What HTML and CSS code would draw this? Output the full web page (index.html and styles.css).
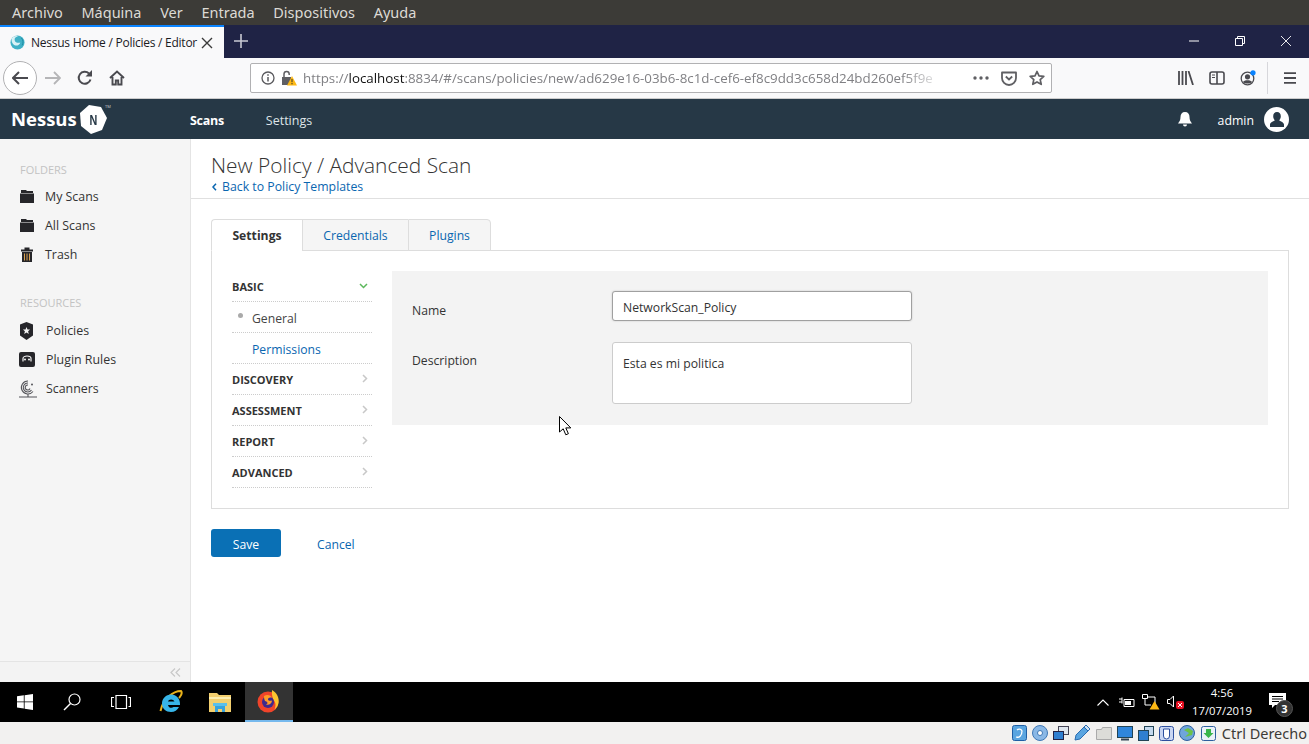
FILE: index.html
```html
<!DOCTYPE html>
<html>
<head>
<meta charset="utf-8">
<title>Nessus Home / Policies / Editor</title>
<link rel="stylesheet" href="styles.css">
</head>
<body>
<div class="vm-menu">
  <span>Archivo</span><span>Máquina</span><span>Ver</span><span>Entrada</span><span>Dispositivos</span><span>Ayuda</span>
</div>

<div class="tabstrip">
  <div class="ff-tab">
    <svg class="favicon" width="15" height="15" viewBox="0 0 16 16"><circle cx="8" cy="8" r="7.500" fill="#3fb1c6"/><path d="M2 3.500c2-2.500 5-3 7-1.500-2.500-.5-4.500 1-4 3.500S8.500 9 11 8c-.5 2.500-3.500 4-6 3S1 6 2 3.500z" fill="#d8f1f5"/><path d="M12 3c2 2 2.500 5 1 8" fill="none" stroke="#1d8aa0"/></svg>
    <span class="ff-tab-title">Nessus Home / Policies / Editor</span>
    <svg class="tab-close" width="12" height="12" viewBox="0 0 12 12"><path d="M1 1l10 10M11 1L1 11" stroke="#3a3a3a" stroke-width="1.400"/></svg>
  </div>
  <svg class="newtab" width="14" height="14" viewBox="0 0 14 14"><path d="M7 0v14M0 7h14" stroke="#c9cad3" stroke-width="1.600"/></svg>
  <div class="win-btns">
    <svg width="10" height="10" viewBox="0 0 10 10"><path d="M0 5h10" stroke="#fff"/></svg>
    <svg width="10" height="10" viewBox="0 0 10 10"><path d="M.5 2.500h7v7h-7zM2.500 2.500v-2h7v7h-2" fill="none" stroke="#fff"/></svg>
    <svg width="10" height="10" viewBox="0 0 10 10"><path d="M0 0l10 10M10 0L0 10" stroke="#fff" stroke-width=".9"/></svg>
  </div>
</div>

<div class="toolbar">
  <div class="back-btn"><svg width="16" height="14" viewBox="0 0 16 14"><path d="M7 1L1 7l6 6M1 7h15" fill="none" stroke="#4a4a4f" stroke-width="2"/></svg></div>
  <svg class="fwd" width="16" height="14" viewBox="0 0 16 14"><path d="M9 1l6 6-6 6M15 7H0" fill="none" stroke="#b5b5b7" stroke-width="1.800"/></svg>
  <svg class="reload" width="16" height="16" viewBox="0 0 16 16"><path d="M13.500 9.500A6 6 0 1 1 12 3.500" fill="none" stroke="#4a4a4f" stroke-width="2"/><path d="M15 0v6.500H8.500z" fill="#4a4a4f"/></svg>
  <svg class="home" width="16" height="16" viewBox="0 0 16 16"><path d="M1 8l7-6.500L15 8M3.500 7v7.500h3.300v-4h2.400v4h3.300V7" fill="none" stroke="#4a4a4f" stroke-width="1.900"/></svg>
  <div class="urlbar">
    <svg class="url-icon" width="14" height="14" viewBox="0 0 14 14"><circle cx="7" cy="7" r="6" fill="none" stroke="#5a5a5e" stroke-width="1.300"/><path d="M7 6v4.500M7 3.200v1.600" stroke="#5a5a5e" stroke-width="1.500"/></svg>
    <svg class="url-lock" width="16" height="16" viewBox="0 0 16 16"><path d="M1 7h9v8H1z" fill="#5f5f63"/><path d="M3 7V4a2.600 2.600 0 0 1 5.200 0v1" fill="none" stroke="#5f5f63" stroke-width="1.500"/><path d="M11 6l5 9.500H6z" fill="#fdb813"/><path d="M11 9v3.200M11 13v1.300" stroke="#333" stroke-width="1"/></svg>
    <span class="url-text">https://<b>localhost</b>:8834/#/scans/policies/new/ad629e16-03b6-8c1d-cef6-ef8c9dd3c658d24bd260ef5f9e</span>
    <svg class="url-act" width="16" height="4" viewBox="0 0 16 4"><circle cx="2" cy="2" r="1.700" fill="#5f5f63"/><circle cx="8" cy="2" r="1.700" fill="#5f5f63"/><circle cx="14" cy="2" r="1.700" fill="#5f5f63"/></svg>
    <svg class="url-act" width="16" height="15" viewBox="0 0 16 15"><path d="M1 1.500h14v5.500a7 7 0 0 1-14 0z" fill="none" stroke="#5f5f63" stroke-width="1.800" stroke-linejoin="round"/><path d="M4.800 5.500L8 8.500l3.200-3" fill="none" stroke="#5f5f63" stroke-width="1.800"/></svg>
    <svg class="url-act" width="16" height="16" viewBox="0 0 16 16"><path d="M8 1.500l2 4.400 4.800.5-3.600 3.200 1 4.700L8 11.900l-4.200 2.400 1-4.700-3.600-3.200 4.800-.5z" fill="none" stroke="#5f5f63" stroke-width="1.700" stroke-linejoin="round"/></svg>
  </div>
  <div class="tool-right">
    <svg width="16" height="14" viewBox="0 0 16 14"><path d="M1 0v14M4.500 0v14M8 0v14M10.500 0l4.500 14" fill="none" stroke="#4a4a4f" stroke-width="1.800"/></svg>
    <svg width="16" height="14" viewBox="0 0 16 14"><rect x="1" y="1" width="14" height="12" rx="2" fill="none" stroke="#4a4a4f" stroke-width="1.600"/><path d="M8 1v12" stroke="#4a4a4f" stroke-width="1.600"/><path d="M3 4h3M3 6.500h3" stroke="#4a4a4f"/></svg>
    <svg width="16" height="16" viewBox="0 0 16 16"><circle cx="7.500" cy="8.500" r="6.300" fill="none" stroke="#4a4a4f" stroke-width="1.300"/><circle cx="7.500" cy="6.800" r="2.600" fill="#4a4a4f"/><path d="M3 12c1-2.500 8-2.500 9 0-2 2-7 2-9 0z" fill="#4a4a4f"/><circle cx="13" cy="2.800" r="2.600" fill="#0a84ff"/></svg>
    <i class="tool-sep"></i>
    <svg width="14" height="12" viewBox="0 0 14 12"><path d="M1 1.200h12M1 6h12M1 10.800h12" stroke="#4a4a4f" stroke-width="1.800"/></svg>
  </div>
</div>

<header class="nessus-bar">
  <div class="logo">
    <span class="logo-word">Nessus</span>
    <span class="logo-badge">
      <svg width="27" height="29" viewBox="0 0 27 29"><path d="M9 0l12 2 6 11-5 12-11 4L1 21 0 8z" fill="#fff"/></svg>
      <b>N</b>
    </span>
    <span class="logo-tm">TM</span>
  </div>
  <nav class="top-nav">
    <a class="on">Scans</a>
    <a>Settings</a>
  </nav>
  <div class="user-area">
    <svg width="14" height="15" viewBox="0 0 14 15"><path d="M7 0c3 0 4.500 2 4.500 5 0 3 1 4.500 2.500 6.500H0C1.500 9.500 2.500 8 2.500 5 2.500 2 4 0 7 0z" fill="#fff"/><path d="M5 12.500h4a2 2 0 0 1-4 0z" fill="#fff"/></svg>
    <span class="user-name">admin</span>
    <span class="avatar"><svg width="14" height="15" viewBox="0 0 14 15"><path d="M7 0c2.500 0 3.800 1.800 3.800 4.200 0 1.700-.7 3.200-1.600 4 .2 1 4.800 1.700 4.800 4.300V15H0v-2.500c0-2.600 4.600-3.300 4.800-4.300-.9-.8-1.600-2.300-1.600-4C3.200 1.800 4.500 0 7 0z" fill="#263846"/></svg></span>
  </div>
</header>

<div class="page">
  <aside class="sidebar">
    <div class="side-scroll">
      <h4>FOLDERS</h4>
      <a class="side-link"><svg width="14" height="13" viewBox="0 0 14 13"><path d="M1 0h5l1 1h6v2H1zM0 3.500h14V13H0z" fill="#26262a"/></svg>My Scans</a>
      <a class="side-link"><svg width="14" height="13" viewBox="0 0 14 13"><path d="M1 0h5l1 1h6v2H1zM0 3.500h14V13H0z" fill="#26262a"/></svg>All Scans</a>
      <a class="side-link"><svg width="14" height="15" viewBox="0 0 14 15"><path d="M1 2.500h12V4.500H1zM4.500 2.500V.5h5v2z" fill="#26262a"/><path d="M2 5h10v10H2z" fill="#26262a"/><path d="M4.500 6.500v7M7 6.500v7M9.500 6.500v7" stroke="#d9a050"/></svg>Trash</a>
      <h4 class="res">RESOURCES</h4>
      <a class="side-link wide"><svg width="15" height="18" viewBox="0 0 15 18"><path d="M7.500 0l6.500 2.500v11L7.500 18 1 13.500v-11z" fill="#26262a"/><path d="M7.500 5l1 2.500 2.600.1-2 1.700.7 2.600-2.300-1.500-2.300 1.500.7-2.600-2-1.700 2.600-.1z" fill="#f5f5f5"/></svg>Policies</a>
      <a class="side-link wide"><svg width="16" height="15" viewBox="0 0 16 15"><rect width="16" height="15" rx="2" fill="#26262a"/><path d="M4 9.500V6.500C4 5 6 4 8 4s4 1 4 2.500v3" fill="none" stroke="#f5f5f5" stroke-width="1.200"/><circle cx="6" cy="7.500" r="1" fill="#f5f5f5"/><circle cx="10" cy="7.500" r="1" fill="#f5f5f5"/></svg>Plugin Rules</a>
      <a class="side-link wide"><svg width="18" height="18" viewBox="0 0 18 18"><path d="M14 11.500A6.500 6.500 0 1 1 9 1M12.500 10A4.500 4.500 0 1 1 9 3M11 8.500A2.500 2.500 0 1 1 9 5M9 13.500V17M0 17h18" fill="none" stroke="#55555a" stroke-width="1.100"/><circle cx="13" cy="4.500" r="1" fill="#55555a"/></svg>Scanners</a>
    </div>
    <div class="side-foot">
      <svg width="11" height="9" viewBox="0 0 11 9"><path d="M5 .5L1 4.500l4 4M10 .5L6 4.500l4 4" fill="none" stroke="#c8c8c8" stroke-width="1.200"/></svg>
    </div>
  </aside>

  <main class="content">
    <div class="title-area">
      <h1>New Policy / Advanced Scan</h1>
      <a class="back-link"><svg width="5" height="8" viewBox="0 0 5 8"><path d="M4 .8L1 4l3 3.200" fill="none" stroke="#0a66b0" stroke-width="1.500"/></svg>Back to Policy Templates</a>
    </div>

    <div class="editor">
      <div class="tabs">
        <a class="tab on">Settings</a>
        <a class="tab">Credentials</a>
        <a class="tab last">Plugins</a>
      </div>
      <div class="panel">
        <ul class="sections">
          <li class="sec">BASIC<svg width="9" height="6" viewBox="0 0 9 6"><path d="M1 1l3.500 3.500L8 1" fill="none" stroke="#5cb85c" stroke-width="1.500"/></svg></li>
          <li class="sub cur">General</li>
          <li class="sub link">Permissions</li>
          <li class="sec">DISCOVERY<svg width="6" height="9" viewBox="0 0 6 9"><path d="M1 1l3.500 3.500L1 8" fill="none" stroke="#c8c8c8" stroke-width="1.500"/></svg></li>
          <li class="sec">ASSESSMENT<svg width="6" height="9" viewBox="0 0 6 9"><path d="M1 1l3.500 3.500L1 8" fill="none" stroke="#c8c8c8" stroke-width="1.500"/></svg></li>
          <li class="sec">REPORT<svg width="6" height="9" viewBox="0 0 6 9"><path d="M1 1l3.500 3.500L1 8" fill="none" stroke="#c8c8c8" stroke-width="1.500"/></svg></li>
          <li class="sec">ADVANCED<svg width="6" height="9" viewBox="0 0 6 9"><path d="M1 1l3.500 3.500L1 8" fill="none" stroke="#c8c8c8" stroke-width="1.500"/></svg></li>
        </ul>
        <div class="form-box">
          <div class="form-row">
            <label>Name</label>
            <div class="input focus">NetworkScan_Policy</div>
          </div>
          <div class="form-row">
            <label>Description</label>
            <div class="input area">Esta es mi politica</div>
          </div>
        </div>
      </div>
      <div class="actions">
        <a class="btn">Save</a>
        <a class="cancel">Cancel</a>
      </div>
    </div>
  </main>
</div>

<svg class="cursor" width="13" height="20" viewBox="0 0 13 20"><path d="M.5.500v15.500l3.700-3.200 2.600 6 2.600-1.100-2.600-5.800h5z" fill="#fff" stroke="#000"/></svg>

<div class="taskbar">
  <div class="task-left">
    <span class="task-item"><svg width="16" height="16" viewBox="0 0 16 16"><path d="M0 2.300l6.800-1v6.200H0zM7.600 1.200L16 0v7.500H7.600zM0 8.300h6.800v6.300l-6.800-1zM7.600 8.300H16V16l-8.400-1.200z" fill="#fff"/></svg></span>
    <span class="task-item"><svg width="18" height="18" viewBox="0 0 18 18"><circle cx="11.500" cy="6.500" r="5.500" fill="none" stroke="#fff" stroke-width="1.200"/><path d="M7.500 10.500L1 17" stroke="#fff" stroke-width="1.500"/></svg></span>
    <span class="task-item"><svg width="20" height="14" viewBox="0 0 20 14"><path d="M5 .5h10.500v13H5zM3 2.500H.5v9H3M17.500 2.500H19.500v9h-2" fill="none" stroke="#fff" stroke-width="1.200"/></svg></span>
    <span class="task-item"><svg width="24" height="24" viewBox="0 0 24 24"><path d="M1.500 21C4 9 14 1 22 1c2 2-1 6-2 7" fill="none" stroke="#e9b21a" stroke-width="2"/><path d="M12 4.500c-5 0-9 4-9 9s4 8.500 9 8.500c3.500 0 6.500-2 8-5h-5.500c-1.500 1.500-5 1-5.500-2h12c.5-6-3.500-10.500-9-10.500zM9 11.500c.5-2.800 5.500-2.800 6.500 0z" fill="#37b5e8"/></svg></span>
    <span class="task-item"><svg width="22" height="20" viewBox="0 0 22 20"><path d="M0 1h8l2 2h12v17H0z" fill="#f3cf6e"/><path d="M0 5h22v2H0z" fill="#fdeeb0"/><path d="M6 13h10v7h-3v-3h-4v3H6z" fill="#38a3dd"/><path d="M4 11h14v3H4z" fill="#5cc0ea"/></svg></span>
    <span class="task-item active"><svg width="24" height="24" viewBox="0 0 24 24"><circle cx="12" cy="13" r="10.500" fill="#f0442a"/><path d="M16 1c5 3 7.500 8 6.500 13-.5 3-2 5-4 6.500 1.500-3 1.500-7-1-9.500-1-2-2-6-1.500-10z" fill="#fdc52f"/><circle cx="12" cy="13" r="6" fill="#3f2a8c"/><path d="M8 7c3-2 7-1 8 2-2-1-4 0-4 1.500s3 1.500 4 1c0 3-3 5-6 4 3-1 1-3-1-3.500-1-2-1-4-1-5z" fill="#ff9b26"/></svg></span>
  </div>
  <div class="tray">
    <svg class="tray-up" width="12" height="7" viewBox="0 0 12 7"><path d="M.5 6.500L6 1l5.500 5.500" fill="none" stroke="#fff" stroke-width="1.100"/></svg>
    <svg width="16" height="11" viewBox="0 0 16 11"><path d="M5 2.500h10v7H5z" fill="none" stroke="#fff"/><path d="M6 4h6v4H6z" fill="#fff"/><path d="M0 2h3M0 5h3M3 .5v6" stroke="#fff"/></svg>
    <svg width="18" height="16" viewBox="0 0 18 16"><path d="M.5.500h5v4h-5zM3 4.500V11h6M6 3h7v8h-2" fill="none" stroke="#fff"/><path d="M12.500 7l5 8.500h-10z" fill="#fdb813"/></svg>
    <svg width="18" height="14" viewBox="0 0 18 14"><path d="M.5 4.500h2.500L6.500 1v11L3 8.500H.5z" fill="none" stroke="#fff"/><rect x="9" y="6" width="8" height="8" rx="2" fill="#e81123"/><path d="M11 8l4 4M15 8l-4 4" stroke="#fff"/></svg>
    <div class="clock"><span>4:56</span><span>17/07/2019</span></div>
    <div class="notif">
      <svg width="17" height="15" viewBox="0 0 17 15"><path d="M0 0h17v12H6l-3 3v-3H0z" fill="#fff"/><path d="M3 3.500h11M3 6h11M3 8.500h7" stroke="#000"/></svg>
      <b>3</b>
    </div>
  </div>
</div>

<div class="statusbar">
  <svg width="15" height="16" viewBox="0 0 15 16"><rect x=".5" y=".5" width="14" height="15" rx="2" fill="#5aa5e0" stroke="#1f5fa5"/><path d="M4 12c3 1 6-1 6-6a3 3 0 0 0-5-1" fill="none" stroke="#fff" stroke-width="1.300"/></svg>
  <svg width="16" height="16" viewBox="0 0 16 16"><circle cx="8" cy="8" r="7.500" fill="#8ab8e6" stroke="#3f78b5"/><circle cx="8" cy="8" r="2.500" fill="#fff" stroke="#3f78b5"/></svg>
  <svg width="16" height="15" viewBox="0 0 16 15"><rect x="5.500" y=".5" width="10" height="8" fill="#dfe6ee" stroke="#445"/><rect x=".5" y="5.500" width="10" height="8" fill="#2f7fd0" stroke="#224"/></svg>
  <svg width="16" height="16" viewBox="0 0 16 16"><path d="M1 15l1-5 8-8 4 4-8 8z" fill="#5aa5e0" stroke="#2b6cb0"/><path d="M10 2l2-2 4 4-2 2z" fill="#cfe3f5" stroke="#2b6cb0"/></svg>
  <svg width="16" height="14" viewBox="0 0 16 14"><path d="M.5 3.500h5l1-2h9v12H.5z" fill="#dcdcd8" stroke="#aaa"/></svg>
  <svg width="16" height="15" viewBox="0 0 16 15"><rect x=".5" y=".5" width="15" height="11" fill="#2f86dc" stroke="#245"/><path d="M4 13.500h8" stroke="#345" stroke-width="2"/></svg>
  <svg width="16" height="15" viewBox="0 0 16 15"><rect x="6.500" y=".5" width="9" height="9" fill="#c5d9ee" stroke="#245"/><rect x=".5" y="4.500" width="10" height="10" fill="#2f7fd0" stroke="#245"/></svg>
  <svg width="15" height="15" viewBox="0 0 15 15"><rect x=".5" y=".5" width="14" height="14" rx="2" fill="#c9d6f2" stroke="#2d4f9e"/><path d="M4.500 3v7a3 3 0 0 0 6 0V3z" fill="#fff" stroke="#2d4f9e"/></svg>
  <svg width="16" height="16" viewBox="0 0 16 16"><circle cx="8" cy="8" r="7.500" fill="#6fa5dc" stroke="#2d5f9e"/><path d="M5 5l5 3-4 4 7-2 1-4-5-3z" fill="#6cc24a"/></svg>
  <svg width="15" height="15" viewBox="0 0 15 15"><rect x=".5" y=".5" width="14" height="14" rx="2" fill="#eaf1f8" stroke="#2d5f9e"/><path d="M5 3h5v4h2.500l-5 5-5-5H5z" fill="#39b54a"/></svg>
  <span class="host-key">Ctrl Derecho</span>
</div>
</body>
</html>
```

FILE: styles.css
```css
* { box-sizing: border-box; }
html, body { margin: 0; padding: 0; height: 744px; overflow: hidden; }
body { position: relative; width: 1309px; font-family: "Open Sans", sans-serif; font-size: 13px; color: #333; background: #fff; }
a { text-decoration: none; }
svg { display: block; flex: none; }

.vm-menu { height: 25px; background: #3c3b37; color: #dcdad5; display: flex; align-items: center; gap: 18.700px; padding: 0 0 2px 12px; font: 14.500px "Noto Sans", sans-serif; }

.tabstrip { height: 33px; background: #1f2345; display: flex; align-items: flex-start; }
.ff-tab { width: 224px; height: 33px; background: #f9f9fa; border-top: 2px solid #0a84ff; display: flex; align-items: center; padding: 0 11px 0 10px; color: #1b1b1f; font-size: 12px; letter-spacing: -.25px; }
.favicon { margin-right: 6px; }
.ff-tab-title { flex: 1; white-space: nowrap; }
.newtab { margin: 9px 0 0 10px; }
.win-btns { margin-left: auto; width: 144px; display: flex; justify-content: space-between; padding: 11px 18px 0 24px; }

.toolbar { height: 41px; background: #f9f9fa; border-bottom: 1px solid #ccc; display: flex; align-items: center; padding-left: 3px; }
.back-btn { width: 34px; height: 34px; border: 1px solid #b1b1b3; border-radius: 50%; background: #fff; display: flex; align-items: center; justify-content: center; }
.fwd { margin-left: 8px; }
.reload { margin-left: 16px; }
.home { margin-left: 16px; }
.urlbar { width: 802px; height: 30px; margin-left: 125px; background: #fff; border: 1px solid #b1b1b3; border-radius: 2px; display: flex; align-items: center; padding: 0 6px 0 10px; }
.url-lock { margin-left: 6px; }
.url-text { flex: none; width: 637px; margin: 0 21px 0 6px; white-space: nowrap; color: #808084; font-size: 13.350px; -webkit-mask-image: linear-gradient(to right, #000 94%, rgba(0,0,0,.25) 99%); mask-image: linear-gradient(to right, #000 94%, rgba(0,0,0,.25) 99%); }
.url-text b { font-weight: 400; color: #111; }
.url-act { margin-left: 12px; }
.url-act:first-of-type { margin-left: 0; }
.tool-right { margin-left: auto; display: flex; align-items: center; gap: 15px; padding-right: 12px; }
.tool-sep { width: 1px; height: 32px; background: #d7d7db; margin: 0 0 0 -4px; }

.nessus-bar { height: 40px; background: #263846; color: #fff; display: flex; align-items: center; }
.logo { position: relative; width: 190px; display: flex; align-items: center; padding-left: 11px; height: 40px; }
.logo-word { font-size: 18.500px; font-weight: 700; line-height: 1; }
.logo-badge { position: relative; width: 27px; height: 29px; margin-left: 3px; }
.logo-badge b { position: absolute; left: 8px; top: 6px; font: 700 15px "Liberation Sans", sans-serif; color: #263846; transform: scaleX(.72); }
.logo-tm { position: absolute; left: 105px; top: 5px; font-size: 4px; color: #ccc; }
.top-nav { display: flex; gap: 42px; font-size: 12.500px; padding-top: 2px; }
.top-nav a { color: #dfe4e8; }
.top-nav a.on { color: #fff; font-weight: 700; letter-spacing: -.3px; }
.user-area { margin-left: auto; display: flex; align-items: center; padding-right: 20px; }
.user-name { margin: 2px 10px 0 26px; font-size: 12.300px; }
.avatar { width: 25px; height: 25px; border-radius: 50%; background: #fff; display: flex; align-items: center; justify-content: center; overflow: hidden; }

.page { height: 543px; display: flex; }
.sidebar { width: 191px; background: #f5f5f5; border-right: 1px solid #e4e4e4; display: flex; flex-direction: column; }
.side-scroll { flex: 1; padding: 24px 0 0 20px; }
.sidebar h4 { margin: 0 0 5px; font-size: 11px; line-height: 14px; font-weight: 400; color: #c3c3c3; }
.sidebar h4.res { margin: 27px 0 6px; }
.side-link { height: 29px; display: flex; align-items: center; color: #333; font-size: 12.400px; }
.side-link svg { margin-right: 11px; }
.side-link.wide { position: relative; padding-left: 26px; }
.side-link.wide svg { position: absolute; left: -1px; margin: 0; }
.side-foot { height: 21px; border-top: 1px solid #e4e4e4; background: #f3f3f3; display: flex; align-items: center; justify-content: flex-end; padding-right: 9px; }

.content { flex: 1; }
.title-area { height: 60px; padding: 13px 0 0 20px; border-bottom: 1px solid #e0e0e0; }
.title-area h1 { margin: 0; font-size: 20.900px; line-height: 26px; font-weight: 300; color: #333; }
.back-link { display: flex; align-items: center; gap: 5px; margin-top: 1px; font-size: 12.300px; line-height: 16px; color: #0a66b0; padding-left: 1px; }

.editor { padding: 20px 20px 0 20px; }
.tabs { display: flex; height: 32px; position: relative; margin-bottom: -1px; }
.tab { height: 32px; border: 1px solid #ddd; border-right: 0; background: #f5f5f5; color: #0a66b0; font-size: 12.200px; display: flex; align-items: center; justify-content: center; width: 106px; }
.tab.on { width: 91px; background: #fff; border-bottom-color: #fff; color: #333; font-weight: 700; border-radius: 4px 0 0 0; }
.tab.last { width: 83px; border-right: 1px solid #ddd; border-radius: 0 4px 0 0; }
.panel { height: 259px; border: 1px solid #ddd; display: flex; padding: 20px; gap: 20px; }
.sections { list-style: none; margin: 0; padding: 0; width: 140px; }
.sections li { height: 31px; border-bottom: 1px dotted #ccc; display: flex; align-items: center; justify-content: space-between; padding: 2px 4px 0 0; }
.sections li.sec { padding-top: 0; font-size: 11px; font-weight: 700; color: #333; }
.sec svg { margin-top: -1px; }
.sections li.sub { font-size: 12.200px; padding-left: 20px; color: #444; position: relative; }
.sections li.sub.link { color: #0a66b0; }
.sub.cur::before { content: ""; position: absolute; left: 6px; top: 11px; width: 5px; height: 5px; border-radius: 50%; background: #aaa; }
.form-box { flex: 1; height: 154px; background: #f3f3f3; padding: 20px; display: flex; flex-direction: column; gap: 21px; }
.form-row { display: flex; font-size: 12.200px; color: #333; }
.form-row label { width: 200px; padding-top: 11px; }
.form-row:last-child label { padding-top: 10px; }
.input { width: 300px; height: 30px; background: #fff; border: 1px solid #ccc; border-radius: 3px; padding: 2px 10px 0; display: flex; align-items: center; color: #333; }
.input.focus { border-color: #a0a0a0; box-shadow: 0 0 2px rgba(0,0,0,.2); }
.input.area { height: 62px; align-items: flex-start; padding-top: 12px; }
.actions { display: flex; align-items: center; margin-top: 20px; }
.btn { width: 70px; height: 28px; background: #0a70b5; color: #fff; border-radius: 3px; display: flex; align-items: center; justify-content: center; font-size: 12.200px; padding-top: 2px; }
.cancel { margin: 2px 0 0 36px; font-size: 12.200px; color: #0a66b0; }

.cursor { position: absolute; left: 559px; top: 416px; }

.taskbar { height: 40px; background: #000; display: flex; justify-content: space-between; }
.task-left { display: flex; }
.task-item { width: 49px; height: 40px; display: flex; align-items: center; justify-content: center; }
.task-item:nth-child(2) { padding-right: 3px; }
.task-item:nth-child(3) { padding-right: 4px; }
.task-item:nth-child(4), .task-item:nth-child(5) { padding-right: 2px; }
.task-item.active { width: 48px; background: #333; border-bottom: 2px solid #76b9ed; padding-right: 2px; }
.tray { display: flex; align-items: center; color: #fff; gap: 7px; padding-right: 16px; }
.tray-up { margin-right: 3px; }
.clock { display: flex; flex-direction: column; align-items: center; font-size: 11.300px; line-height: 18px; width: 60px; }
.notif { position: relative; width: 24px; height: 30px; margin-left: 10px; padding-top: 6px; }
.notif b { position: absolute; left: 7px; top: 13px; width: 17px; height: 17px; border-radius: 50%; background: #333; border: 1px solid #555; font-size: 11px; line-height: 15px; font-weight: 700; text-align: center; }

.statusbar { height: 22px; background: #f2f1f0; display: flex; align-items: center; justify-content: flex-end; gap: 5.200px; padding-right: 2px; font: 14.500px "Noto Sans", sans-serif; color: #3c3b37; }
.host-key { margin-left: 1px; }
```
